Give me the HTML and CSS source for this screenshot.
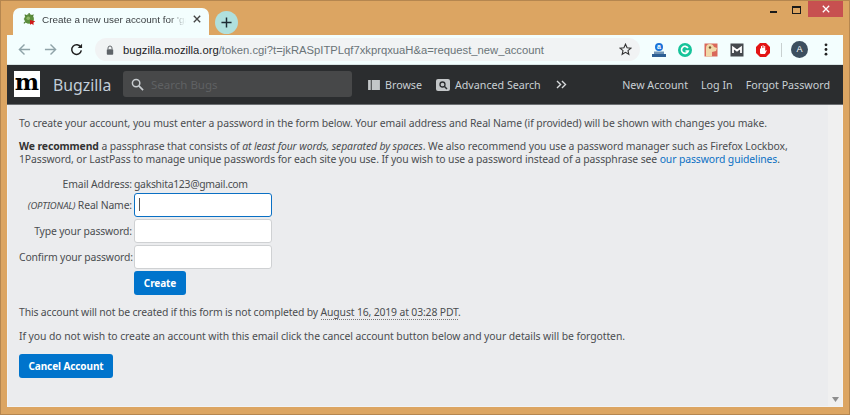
FILE: index.html
```html
<!DOCTYPE html>
<html lang="en">
<head>
<meta charset="utf-8">
<title>Create a new user account</title>
<link rel="stylesheet" href="styles.css">
</head>
<body>
<div class="window">
  <div class="titlebar">
    <div class="tab">
      <svg class="favicon" viewBox="0 0 16 16" width="14" height="14"><circle cx="7" cy="8" r="5.5" fill="#5c8f3c"/><path d="M2 3l2 2M7 1v3M12 3l-2 2M1 8h2M1 13l2-2" stroke="#4c7a30" stroke-width="1.4"/><circle cx="6" cy="7" r="2" fill="#8fb86a"/><path d="M8 9l6 1.500-2 1.500 0 3-2-1.500-2 1z" fill="#d01818"/></svg>
      <span class="tab-title">Create a new user account for 'ga</span>
      <svg class="tab-close" viewBox="0 0 10 10" width="8" height="8"><path d="M1 1l8 8M9 1l-8 8" stroke="#444" stroke-width="1.700"/></svg>
    </div>
    <div class="newtab"><svg viewBox="0 0 12 12" width="11" height="11"><path d="M6 .5v11M.5 6h11" stroke="#1c2b33" stroke-width="1.600"/></svg></div>
    <div class="winctl">
      <span class="min"></span>
      <span class="max"></span>
      <span class="close"><svg viewBox="0 0 10 10" width="8" height="8"><path d="M1 1l8 8M9 1l-8 8" stroke="#fff" stroke-width="1.600"/></svg></span>
    </div>
  </div>
  <div class="toolbar">
    <svg class="nav" viewBox="0 0 14 14" width="13" height="13"><path d="M13 7H2M7 1.500L1.500 7 7 12.500" fill="none" stroke="#8fa3a8" stroke-width="1.500"/></svg>
    <svg class="nav" viewBox="0 0 14 14" width="13" height="13"><path d="M1 7h11M7 1.500L12.500 7 7 12.500" fill="none" stroke="#8fa3a8" stroke-width="1.500"/></svg>
    <svg class="nav" viewBox="0 0 14 14" width="13" height="13"><path d="M11.600 4.500A5.200 5.200 0 1 0 12.200 8" fill="none" stroke="#222" stroke-width="1.600"/><path d="M8.300 5.500h4.700V.8z" fill="#222"/></svg>
    <div class="omnibox">
      <svg class="lock" viewBox="0 0 10 12" width="8" height="10"><path d="M2.500 5V3.500a2.500 2.500 0 0 1 5 0V5" fill="none" stroke="#5f6368" stroke-width="1.200"/><rect x="1" y="5" width="8" height="7" rx="1" fill="#5f6368"/></svg>
      <span class="url"><b>bugzilla.mozilla.org</b>/token.cgi?t=jkRASpITPLqf7xkprqxuaH&amp;a=request_new_account</span>
      <svg class="star" viewBox="0 0 14 14" width="13" height="13"><path d="M7 1.300l1.700 3.800 4.100.4-3.100 2.700.9 4-3.600-2.100-3.600 2.100.9-4L1.200 5.500l4.100-.4z" fill="none" stroke="#333" stroke-width="1.200"/></svg>
    </div>
    <div class="exts">
      <svg viewBox="0 0 16 16" width="16" height="16"><circle cx="8" cy="5" r="4" fill="#1a73d9"/><text class="ext-letter" x="8" y="7" text-anchor="middle">a</text><rect x="3" y="9.500" width="10" height="2.500" fill="#6f93b5"/><rect x="1" y="12" width="14" height="3" fill="#2d5f94"/></svg>
      <svg viewBox="0 0 16 16" width="16" height="16"><circle cx="8" cy="8" r="7" fill="#15c39a"/><path d="M11 6a3.500 3.500 0 1 0 .3 3H8.500" fill="none" stroke="#fff" stroke-width="1.600"/></svg>
      <svg viewBox="0 0 16 16" width="16" height="16"><rect x="1.500" y="1.500" width="13" height="13" fill="#d9685a"/><path d="M3 14.500V6q0-4 4-4 3 0 4 3l3 1-1 3-4 1v4.500z" fill="#f0d9a8"/><circle cx="7" cy="5.500" r="1.200" fill="#7a5a30"/></svg>
      <svg viewBox="0 0 16 16" width="16" height="16"><rect x="1.500" y="1.500" width="13" height="13" fill="#454a4e"/><path d="M4 11V5.500l4 3 4-3V11" fill="none" stroke="#fff" stroke-width="1.800"/></svg>
      <svg viewBox="0 0 16 16" width="16" height="16"><path d="M5 1h6l4 4v6l-4 4H5l-4-4V5z" fill="#e31414"/><path d="M5 11.500V6.500h1V4h1v2h.6V3.300h1V6h.6V4h1v5l1-1 .6.600-1.800 3.400H6z" fill="#fff"/></svg>
    </div>
    <span class="divider"></span>
    <span class="avatar">A</span>
    <svg class="kebab" viewBox="0 0 4 14" width="4" height="13"><circle cx="2" cy="2" r="1.500"/><circle cx="2" cy="7" r="1.500"/><circle cx="2" cy="12" r="1.500"/></svg>
  </div>
  <header class="bz-header">
    <div class="logo">m</div>
    <span class="brand">Bugzilla</span>
    <div class="search">
      <svg viewBox="0 0 14 14" width="13" height="13"><circle cx="5.500" cy="5.500" r="4" fill="none" stroke="#c9cdd0" stroke-width="1.600"/><path d="M8.500 8.500l4.500 4.500" stroke="#c9cdd0" stroke-width="1.800"/></svg>
      <span>Search Bugs</span>
    </div>
    <nav class="bz-nav">
      <span class="nav-item"><svg viewBox="0 0 13 11" width="12" height="10"><rect width="13" height="11" fill="#c3c6c8"/><path d="M3.500 0v11" stroke="#2b2d2f"/></svg>Browse</span>
      <span class="nav-item"><svg viewBox="0 0 14 12" width="14" height="12"><rect width="14" height="12" rx="2" fill="#c3c6c8"/><circle cx="6.500" cy="5.500" r="2.500" fill="none" stroke="#2b2d2f" stroke-width="1.300"/><path d="M8.500 7.500l2.500 2.500" stroke="#2b2d2f" stroke-width="1.500"/></svg>Advanced Search</span>
      <svg class="chev" viewBox="0 0 12 10" width="11" height="9"><path d="M1 1l4 4-4 4M6.500 1l4 4-4 4" fill="none" stroke="#d8dadc" stroke-width="1.500"/></svg>
    </nav>
    <nav class="bz-account">
      <span>New Account</span>
      <span>Log In</span>
      <span>Forgot Password</span>
    </nav>
  </header>
  <div class="viewport">
    <main class="content">
      <p class="p-first">To create your account, you must enter a password in the form below. Your email address and Real Name (if provided) will be shown with changes you make.</p>
      <p class="p-rec"><strong>We recommend</strong> a passphrase that consists of <em>at least four words, separated by spaces</em>. We also recommend you use a password manager such as Firefox Lockbox,<br>1Password, or LastPass to manage unique passwords for each site you use. If you wish to use a password instead of a passphrase see <a href="#">our password guidelines</a>.</p>
      <form class="form">
        <label class="lbl lbl-email">Email Address:</label><span class="email">gakshita123@gmail.com</span>
        <label class="lbl"><em class="opt">(OPTIONAL)</em> Real Name:</label><div class="input focus"><i class="caret"></i></div>
        <label class="lbl">Type your password:</label><div class="input"></div>
        <label class="lbl">Confirm your password:</label><div class="input"></div>
        <span></span><button class="btn btn-create" type="button">Create</button>
      </form>
      <p class="p-expire">This account will not be created if this form is not completed by <u class="date">August 16, 2019 at 03:28 PDT</u>.</p>
      <p class="p-cancel">If you do not wish to create an account with this email click the cancel account button below and your details will be forgotten.</p>
      <button class="btn btn-cancel" type="button">Cancel Account</button>
    </main>
    <aside class="scrollbar">
      <svg viewBox="0 0 7 5" width="7" height="5"><path d="M0 0h7L3.500 5z" fill="#8e8e8e"/></svg>
    </aside>
  </div>
</div>
</body>
</html>
```
FILE: styles.css
```css
* { box-sizing: border-box; }
html, body { margin: 0; padding: 0; width: 850px; height: 415px; overflow: hidden; }
body { font-family: "Noto Sans", "Open Sans", sans-serif; color: #4a4d50; }
.window {
  width: 850px; height: 415px; display: flex; flex-direction: column;
  background: #dca562; border: 1px solid #b5864f;
  padding: 0 6px 7px 6px;
}
.titlebar { height: 34px; display: flex; align-items: flex-start; padding-left: 6px; flex: none; }
.tab {
  margin-top: 7px; width: 196px; height: 27px; background: #f3fefe;
  border-radius: 7px 7px 0 0; display: flex; align-items: center; padding: 0 0 5px 10px; gap: 5px;
}
.favicon { flex: none; }
.tab-title {
  font-family: "Liberation Sans", sans-serif; font-size: 9.900px; color: #3c4043; white-space: nowrap; width: 144px; flex: none;
  -webkit-mask-image: linear-gradient(to right, #000 88%, transparent);
  mask-image: linear-gradient(to right, #000 88%, transparent);
}
.tab-close { flex: none; margin-left: 2px; }
.newtab {
  margin: 10px 0 0 6px; width: 23px; height: 23px; border-radius: 50%; background: #b0e0dd;
  display: flex; align-items: center; justify-content: center;
}
.winctl { margin-left: auto; display: flex; align-items: flex-start; }
.min { width: 7px; height: 2px; background: #1a1a1a; margin: 10px 15px 0 0; display: block; }
.max { width: 9px; height: 8px; border: 1px solid #1a1a1a; border-top-width: 2px; margin: 5px 7px 0 0; display: block; }
.close { width: 35px; height: 16px; background: #c75050; display: flex; align-items: center; justify-content: center; }
.toolbar {
  height: 30px; background: #f3fefe; display: flex; align-items: center; flex: none; padding: 0 0 0 11px;
  border-bottom: 1px solid #d8e4e4;
}
.nav { margin-right: 13px; flex: none; }
.omnibox {
  width: 545px; height: 23px; border-radius: 12px; background: #f1f3f4; display: flex; align-items: center; padding: 0 8px 0 11px; flex: none; margin-left: -1px;
}
.lock { flex: none; margin-right: 9px; }
.url { font-family: "Liberation Sans", sans-serif; font-size: 11.250px; color: #6a7478; white-space: nowrap; flex: 1; }
.url b { font-weight: 400; color: #202124; }
.star { flex: none; }
.exts { display: flex; gap: 10px; margin-left: 11px; align-items: center; }
.ext-letter { font: 700 7px "Liberation Sans", sans-serif; fill: #fff; }
.divider { width: 1px; height: 14px; background: #c8d0d0; margin: 0 9px 0 10px; }
.avatar {
  width: 17px; height: 17px; border-radius: 50%; background: #3d4f5f; color: #fff;
  font: 9px/17px "Liberation Sans", sans-serif; text-align: center; flex: none;
}
.kebab { fill: #222; margin-left: 16px; flex: none; }
.bz-header {
  height: 40px; background: #2b2d2f; display: flex; align-items: center; flex: none; padding: 0 13px 0 7px;
  color: #c9d0d4; font-size: 10.700px; border-bottom: 1px solid #6c6f72;
}
.logo {
  width: 26px; height: 26px; background: #fff; color: #000; flex: none;
  font: 700 23px/22px "DejaVu Serif", serif; text-align: center; margin-top: -1px;
}
.brand { font-size: 15.800px; margin-left: 13px; width: 70px; flex: none; color: #c2cdd8; }
.search {
  width: 229px; height: 26px; background: #474849; border-radius: 3px; display: flex; align-items: center;
  padding-left: 8px; gap: 7px; color: #5f6163; font-size: 11.500px; flex: none; margin-top: -1px;
}
.bz-nav { display: flex; align-items: center; margin-left: 16px; flex: none; }
.nav-item { display: inline-flex; align-items: center; gap: 5px; margin-right: 14px; white-space: nowrap; }
.chev { margin-left: 1px; }
.bz-account { margin-left: auto; display: flex; gap: 13px; white-space: nowrap; }
.viewport { flex: 1; display: flex; min-height: 0; background: #ebecee; border: 1px solid #f2f3f4; border-top: 0; }
.content { flex: 1; padding: 0 11px; font-size: 10.400px; letter-spacing: -0.1px; line-height: 13px; min-width: 0; }
.content p { margin: 0; }
.p-first { padding-top: 12px; }
.p-rec { padding-top: 10px; }
.content a { color: #0a70c4; text-decoration: none; }
.content strong { color: #333; }
.form {
  display: grid; grid-template-columns: 113px 138px; column-gap: 2px; margin-top: 11px;
  grid-template-rows: 15px 26px 26px 26px 26px;
  align-items: center;
}
.lbl { text-align: right; white-space: nowrap; letter-spacing: -0.15px; }
.opt { font-size: 9.500px; }
.email { white-space: nowrap; letter-spacing: -0.28px; }
.input {
  width: 138px; height: 24px; background: #fff; border: 1px solid #cfd1d3; border-radius: 3px;
  padding: 4px;
}
.input.focus { border-color: #0a70c4; }
.caret { display: block; width: 1px; height: 13px; background: #555; }
.btn {
  background: #0074cc; color: #fff; border: 0; border-radius: 3px; font-family: inherit; font-weight: 700; font-size: 10px; letter-spacing: -0.1px;
  padding: 0; display: block;
}
.btn-create { width: 52px; height: 24px; }
.btn-cancel { width: 94px; height: 24px; margin-top: 11px; }
.content .p-expire { margin-top: 10px; letter-spacing: -0.14px; }
.content .p-cancel { margin-top: 11px; letter-spacing: -0.07px; }
.date { text-decoration: none; border-bottom: 1px dotted #777; }
.scrollbar { width: 14px; flex: none; background: #f0f0f0; display: flex; align-items: flex-end; justify-content: center; padding-bottom: 4px; }
```
